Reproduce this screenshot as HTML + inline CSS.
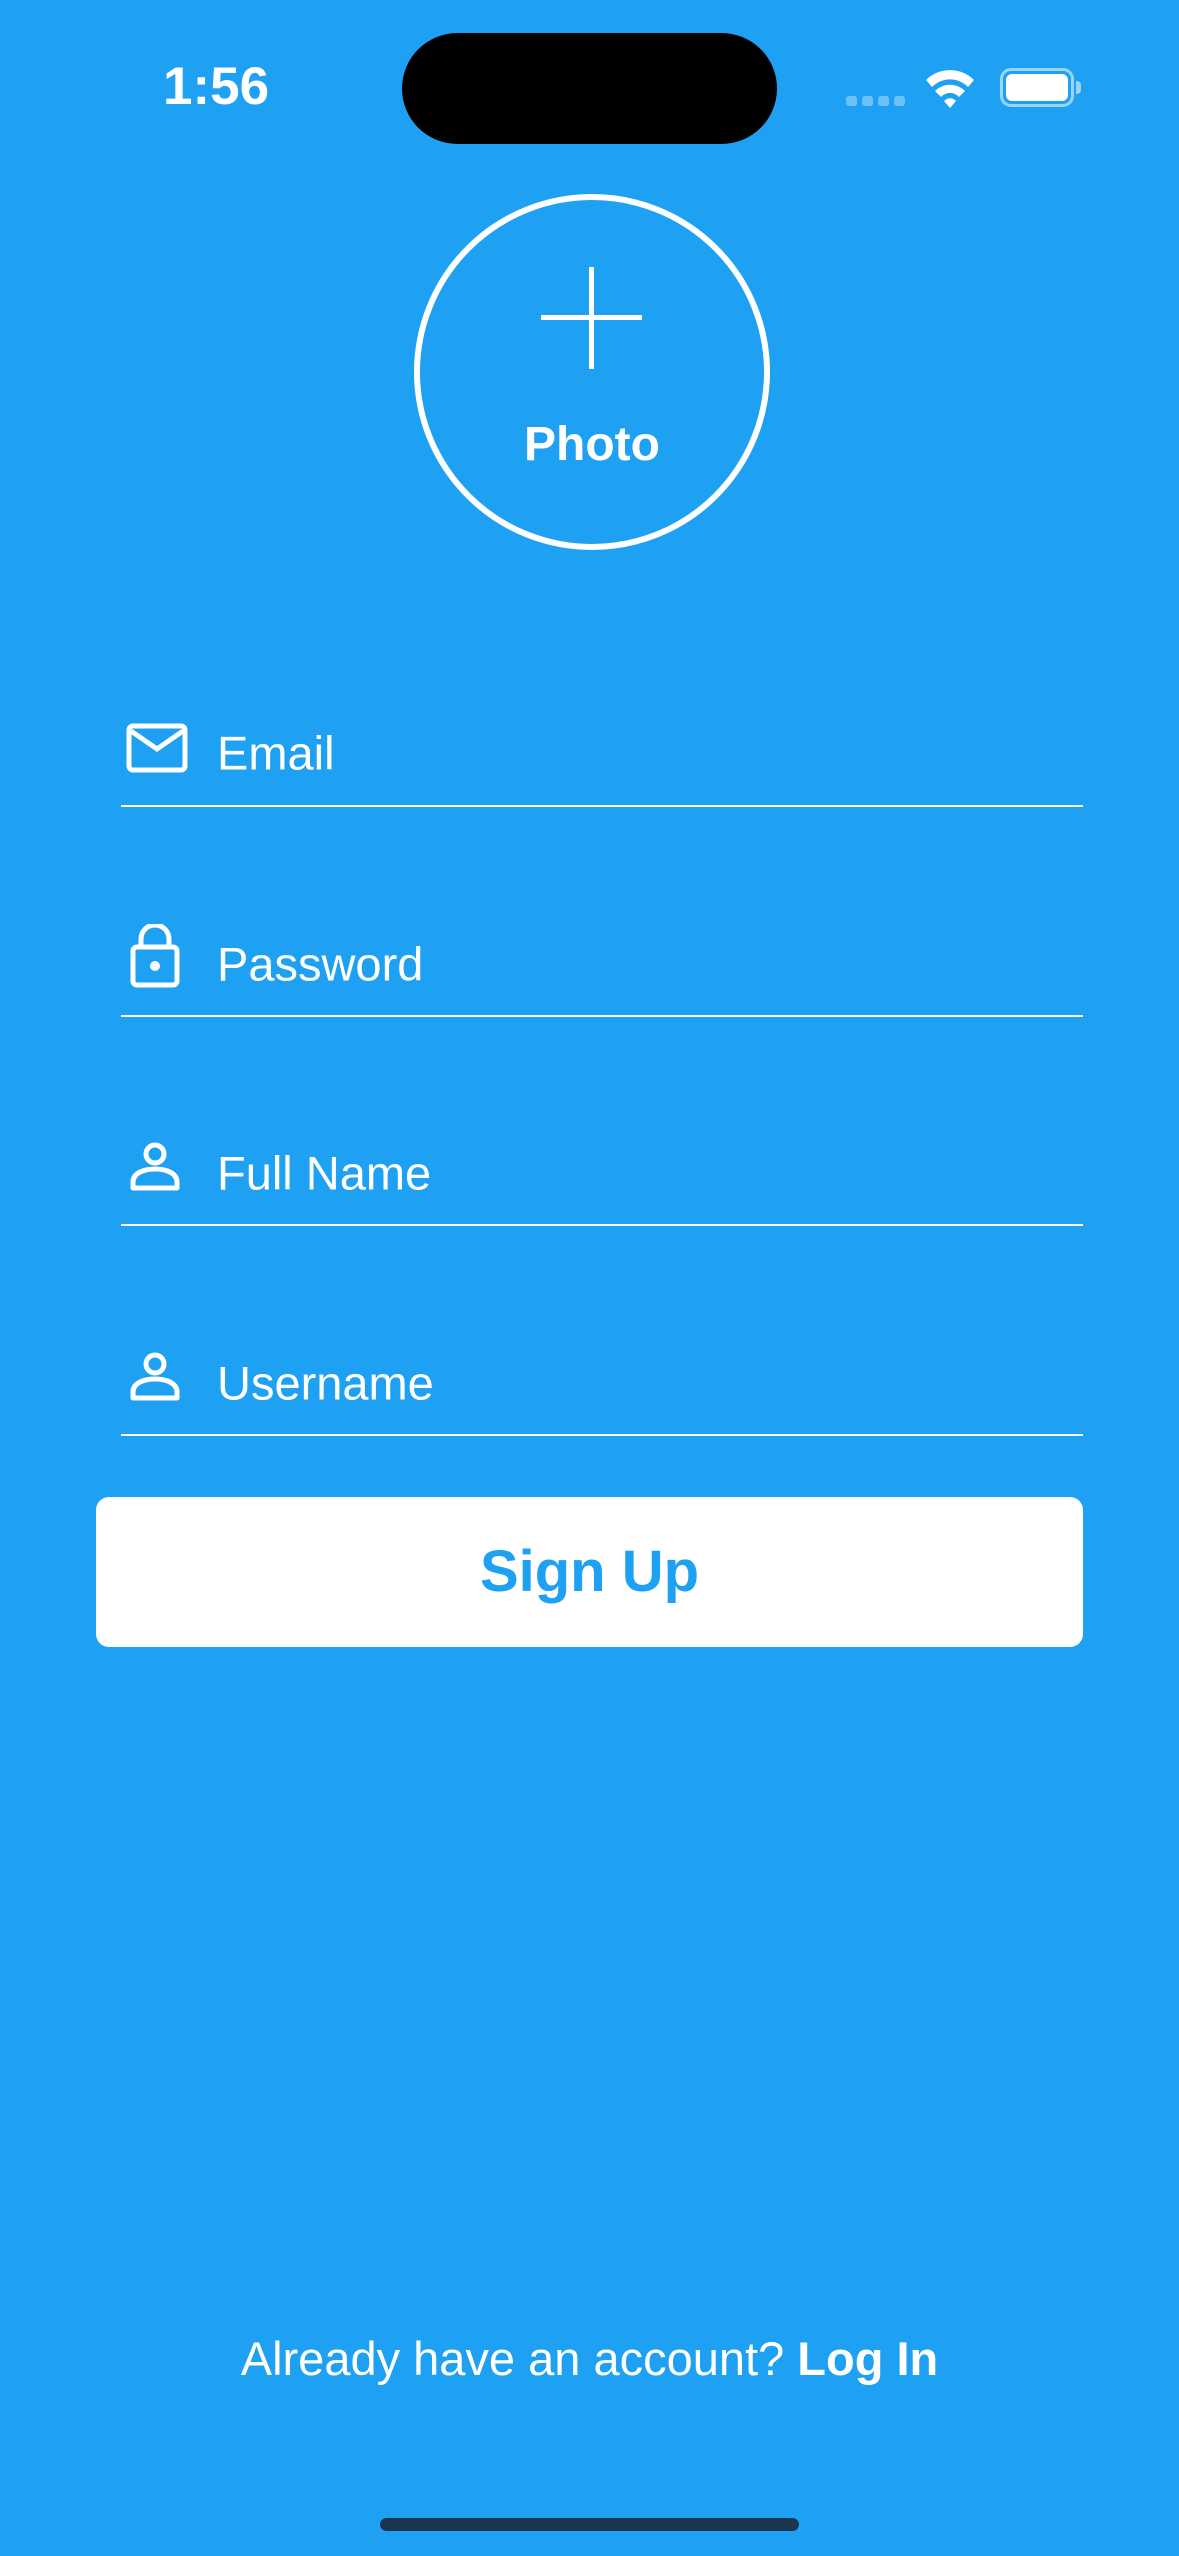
<!DOCTYPE html>
<html><head><meta charset="utf-8"><style>
*{margin:0;padding:0;box-sizing:border-box}
body{width:1179px;height:2556px;background:#1EA1F2;position:relative;overflow:hidden;font-family:"Liberation Sans",sans-serif;color:#fff}
.a{position:absolute}
.lbl{position:absolute;left:217px;font-size:47px;line-height:1;transform:translateY(-50%)}
.line{position:absolute;left:121px;width:962px;height:2px;background:#fff}
</style></head><body>
<div class="a" style="left:163px;top:60px;font-size:53px;font-weight:bold;line-height:1">1:56</div>
<div class="a" style="left:402px;top:33px;width:375px;height:111px;border-radius:56px;background:#000"></div>
<div class="a" style="left:846px;top:96px;width:60px;height:10px">
 <div class="a" style="left:0;top:0;width:11px;height:10px;border-radius:3px;background:rgba(255,255,255,.35)"></div>
 <div class="a" style="left:16px;top:0;width:11px;height:10px;border-radius:3px;background:rgba(255,255,255,.35)"></div>
 <div class="a" style="left:32px;top:0;width:11px;height:10px;border-radius:3px;background:rgba(255,255,255,.35)"></div>
 <div class="a" style="left:48px;top:0;width:11px;height:10px;border-radius:3px;background:rgba(255,255,255,.35)"></div>
</div>
<svg class="a" style="left:924px;top:66px" width="52" height="42" viewBox="0 0 52 42"><path d="M2 14 A34 34 0 0 1 50 14 L44 21 A25 25 0 0 0 8 21Z M11 25 A21 21 0 0 1 41 25 L35 31 A12 12 0 0 0 17 31Z M20 35 A8 8 0 0 1 32 35 L26 42Z" fill="#fff"/></svg>
<div class="a" style="left:1000px;top:68px;width:74px;height:39px;border:3px solid rgba(255,255,255,.55);border-radius:11px"></div>
<div class="a" style="left:1006px;top:74px;width:62px;height:27px;border-radius:6px;background:#fff"></div>
<div class="a" style="left:1076px;top:81px;width:5px;height:13px;border-radius:0 4px 4px 0;background:rgba(255,255,255,.55)"></div>

<div class="a" style="left:414px;top:194px;width:356px;height:356px;border:6px solid #fff;border-radius:50%"></div>
<div class="a" style="left:541px;top:315px;width:101px;height:5px;background:#fff"></div>
<div class="a" style="left:589px;top:267px;width:5px;height:102px;background:#fff"></div>
<div class="a" style="left:0;width:1184px;top:420px;text-align:center;font-size:48px;font-weight:bold;line-height:50px">Photo</div>

<svg class="a" style="left:126px;top:723px" width="62" height="50" viewBox="0 0 62 50"><rect x="3" y="3" width="56" height="44" rx="4" fill="none" stroke="#fff" stroke-width="5"/><path d="M5 8 L31 26 L57 8" fill="none" stroke="#fff" stroke-width="5"/></svg>
<div class="lbl" style="top:753px">Email</div>
<div class="line" style="top:805px"></div>

<svg class="a" style="left:130px;top:924px" width="50" height="64" viewBox="0 0 50 64"><path d="M11 24 V15 A14 14 0 0 1 39 15 V24" fill="none" stroke="#fff" stroke-width="5"/><rect x="3" y="23" width="44" height="38" rx="4" fill="none" stroke="#fff" stroke-width="5"/><circle cx="25" cy="42" r="5" fill="#fff"/></svg>
<div class="lbl" style="top:964px">Password</div>
<div class="line" style="top:1015px"></div>

<svg class="a" style="left:130px;top:1142px" width="50" height="50" viewBox="0 0 50 50"><circle cx="25" cy="12" r="9" fill="none" stroke="#fff" stroke-width="5"/><path d="M3 46 V40 C3 31 14 27 25 27 C36 27 47 31 47 40 V46 Z" fill="none" stroke="#fff" stroke-width="5" stroke-linejoin="round"/></svg>
<div class="lbl" style="top:1173px">Full Name</div>
<div class="line" style="top:1224px"></div>

<svg class="a" style="left:130px;top:1352px" width="50" height="50" viewBox="0 0 50 50"><circle cx="25" cy="12" r="9" fill="none" stroke="#fff" stroke-width="5"/><path d="M3 46 V40 C3 31 14 27 25 27 C36 27 47 31 47 40 V46 Z" fill="none" stroke="#fff" stroke-width="5" stroke-linejoin="round"/></svg>
<div class="lbl" style="top:1383px">Username</div>
<div class="line" style="top:1434px"></div>

<div class="a" style="left:96px;top:1497px;width:987px;height:150px;background:#fff;border-radius:13px;color:#1EA1F2;font-size:58px;font-weight:bold;text-align:center;line-height:150px">Sign Up</div>

<div class="a" style="left:0;width:1179px;top:2331px;text-align:center;font-size:47px;line-height:56px">Already have an account? <b>Log In</b></div>
<div class="a" style="left:380px;top:2518px;width:419px;height:13px;border-radius:7px;background:#1a3550"></div>
</body></html>
